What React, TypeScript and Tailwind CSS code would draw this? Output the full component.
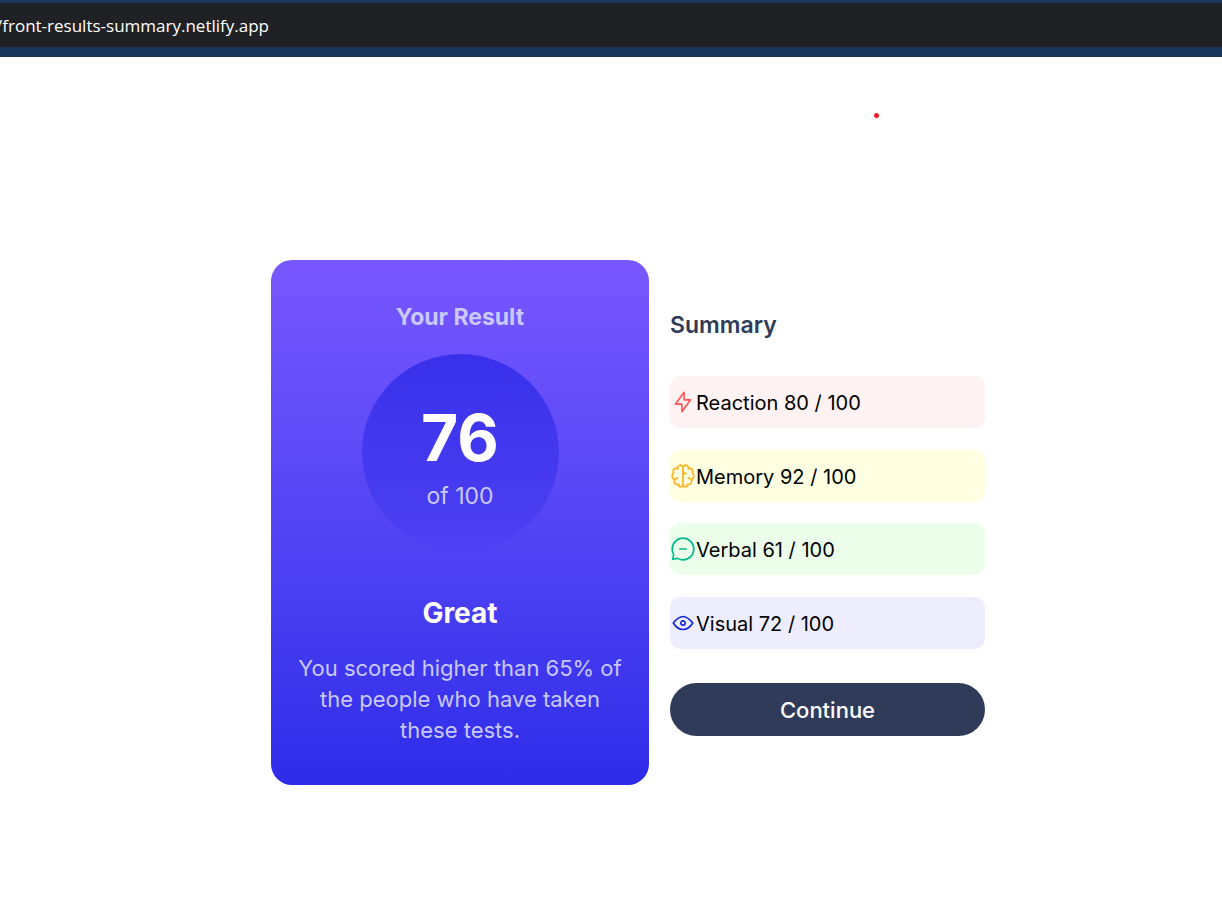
import type { ReactNode } from "react";

type Result = {
  label: string;
  score: number;
  row: string;
  stroke: string;
  icon: ReactNode;
};

const results: Result[] = [
  {
    label: "Reaction",
    score: 80,
    row: "bg-[#fff2f2]",
    stroke: "stroke-[#ff5555]",
    icon: <path d="M10.833 8.333V2.5l-6.666 9.167h5V17.5l6.666-9.167h-5Z" />,
  },
  {
    label: "Memory",
    score: 92,
    row: "bg-[#ffffe1]",
    stroke: "stroke-[#ffb21e]",
    icon: (
      <>
        <path d="M5.833 11.667a2.5 2.5 0 1 0 .834 4.858" />
        <path d="M3.553 13.004a3.333 3.333 0 0 1-.728-5.53m.025-.067a2.083 2.083 0 0 1 2.983-2.824m.199.054A2.083 2.083 0 1 1 10 3.75v12.917a1.667 1.667 0 0 1-3.333 0M10 5.833a2.5 2.5 0 0 0 2.5 2.5m1.667 3.334a2.5 2.5 0 1 1-.834 4.858" />
        <path d="M16.447 13.004a3.334 3.334 0 0 0 .728-5.53m-.025-.067a2.083 2.083 0 0 0-2.983-2.824M10 3.75a2.085 2.085 0 0 1 2.538-2.033 2.084 2.084 0 0 1 1.43 2.92m-.635 12.03a1.667 1.667 0 0 1-3.333 0" />
      </>
    ),
  },
  {
    label: "Verbal",
    score: 61,
    row: "bg-[#ebffeb]",
    stroke: "stroke-[#00bb8f]",
    icon: (
      <path d="M7.5 10h5M10 18.333A8.333 8.333 0 1 0 1.667 10c0 1.518.406 2.942 1.115 4.167l-.699 3.75 3.75-.699A8.295 8.295 0 0 0 10 18.333Z" />
    ),
  },
  {
    label: "Visual",
    score: 72,
    row: "bg-[#ededfd]",
    stroke: "stroke-[#1125d6]",
    icon: (
      <>
        <path d="M10 11.667a1.667 1.667 0 1 0 0-3.334 1.667 1.667 0 0 0 0 3.334Z" />
        <path d="M17.5 10c-1.574 2.492-4.402 5-7.5 5s-5.926-2.508-7.5-5C4.416 7.632 6.66 5 10 5s5.584 2.632 7.5 5Z" />
      </>
    ),
  },
];

function AddressBar() {
  return (
    <header className="border-t-[3px] border-b-10 border-[#1a365d] bg-[#202124]">
      <p className="-ml-1 pt-px font-['Open_Sans','Noto_Sans',sans-serif] text-[17px] leading-[43px] whitespace-nowrap text-white">
        /front-results-summary.netlify.app
      </p>
    </header>
  );
}

function ResultCard() {
  return (
    <section className="flex w-full max-w-[378px] flex-col items-center rounded-[21px] bg-linear-to-b from-[#7857ff] to-[#2e2be9] px-6 pt-[41px] pb-[39px] text-center text-[#cac9ff]">
      <h1 className="text-[23px] leading-8 font-bold">Your Result</h1>
      <div className="mt-[21px] flex size-[197px] flex-col items-center justify-center rounded-full bg-linear-to-b from-[#3830eb] to-[#4e40f3] pt-2.5">
        <p className="text-[64px] leading-[76px] font-bold text-white">76</p>
        <p className="text-[23px] leading-10">of 100</p>
      </div>
      <h2 className="mt-11 text-[28px] leading-9 font-bold text-white">Great</h2>
      <p className="mt-[22px] text-[22px] leading-[31px]">
        You scored higher than 65% of the people who have taken these tests.
      </p>
    </section>
  );
}

function Summary() {
  return (
    <section className="w-full max-w-[315px]">
      <h2 className="text-[23px] leading-8 font-semibold text-[#303b5a]">Summary</h2>
      <ul className="mt-[35px] flex h-[273px] flex-col justify-between">
        {results.map((r) => (
          <li key={r.label} className={`flex h-[52px] items-center rounded-[10px] ${r.row}`}>
            <svg
              viewBox="0 0 20 20"
              className={`size-[26px] shrink-0 fill-none stroke-[1.25] ${r.stroke}`}
              strokeLinecap="round"
              strokeLinejoin="round"
              aria-hidden="true"
            >
              {r.icon}
            </svg>
            <span className="pt-0.5 text-xl text-black">
              {r.label} {r.score} / 100
            </span>
          </li>
        ))}
      </ul>
      <button
        type="button"
        className="mt-[34px] h-[53px] w-full rounded-full bg-[#303b5a] pt-0.5 text-[22px] font-medium text-white"
      >
        Continue
      </button>
    </section>
  );
}

export default function App() {
  return (
    <div className="relative min-h-screen overflow-x-hidden bg-white font-['Inter','Liberation_Sans',sans-serif]">
      <AddressBar />
      <span className="absolute top-[113px] left-[874px] size-[5px] rounded-full bg-[#ec1c24]" />
      <main className="flex flex-wrap items-center justify-center gap-[21px] pt-[203px] pb-12 pl-[34px]">
        <ResultCard />
        <Summary />
      </main>
    </div>
  );
}
